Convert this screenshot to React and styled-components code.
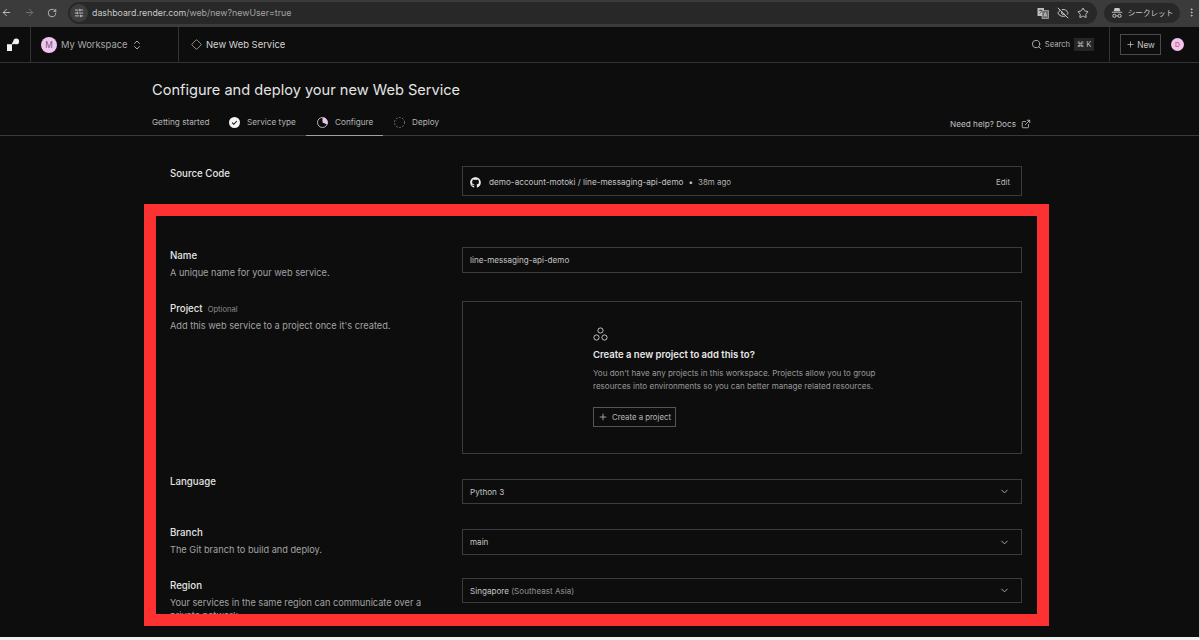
import styled, { createGlobalStyle } from "styled-components";
import { ArrowLeft, ArrowRight, RotateCw, SlidersHorizontal, EyeOff, Star, EllipsisVertical, ChevronsUpDown, Diamond, Search, Plus, ExternalLink, ChevronDown } from "lucide-react";
import { FaGithub } from "react-icons/fa";

const GlobalStyle = createGlobalStyle`
  html, body { margin: 0; padding: 0; background: #0d0d0d; }
  body { font-family: Inter, "Liberation Sans", sans-serif; overflow: hidden; }
`;

const Frame = styled.div`
  position: relative;
  width: 1200px;
  height: 640px;
  box-sizing: border-box;
  overflow: hidden;
  background: #0d0d0d;
  border-right: 1px solid #cfcfcf;
  border-bottom: 3px solid #f0f0f0;
  color: #e8e8e8;
`;

/* browser chrome */
const BrowserBar = styled.div`
  height: 27px;
  display: flex;
  align-items: center;
  background: #3b3b3b;
  box-sizing: border-box;
  padding: 0 0 2px 0;
`;
const NavArrows = styled.div`
  width: 68px;
  display: flex;
  align-items: center;
  justify-content: space-between;
  box-sizing: border-box;
  padding: 0 11px 0 1px;
  color: #c4c4c4;
`;
const Omnibox = styled.div`
  width: 1029px;
  height: 22px;
  display: flex;
  align-items: center;
  border-radius: 11px;
  background: #282828;
`;
const SiteIcon = styled.div`
  width: 18px;
  height: 18px;
  margin-left: 2px;
  border-radius: 50%;
  background: #3d3d3d;
  display: flex;
  align-items: center;
  justify-content: center;
  color: #d4d4d4;
`;
const Url = styled.span`
  margin-left: 4px;
  flex: 1;
  font-size: 8.8px;
  color: #c8c8c8;
  span { color: #a4a4a4; }
`;
const OmniIcons = styled.div`
  display: flex;
  align-items: center;
  gap: 8px;
  padding-right: 8px;
  color: #c4c4c4;
`;
const Incognito = styled.div`
  width: 76px;
  height: 20px;
  margin-left: 7px;
  border-radius: 10px;
  background: #282828;
  display: flex;
  align-items: center;
  justify-content: center;
  gap: 5px;
  font-family: "Noto Sans CJK JP", sans-serif;
  font-size: 7.6px;
  color: #c8c8c8;
`;
const MenuDots = styled.div`
  margin-left: 6px;
  display: flex;
  color: #c4c4c4;
`;

/* top nav */
const Nav = styled.nav`
  height: 36px;
  display: flex;
  align-items: stretch;
  box-sizing: border-box;
  border-bottom: 1px solid #333;
  font-size: 9.5px;
`;
const LogoCell = styled.div`
  width: 31px;
  box-sizing: border-box;
  border-right: 1px solid #333;
  display: flex;
  align-items: center;
  padding-left: 6px;
`;
const WorkspaceCell = styled.div`
  width: 148px;
  box-sizing: border-box;
  border-right: 1px solid #333;
  display: flex;
  align-items: center;
  padding-left: 10px;
  color: #a8a8a8;
`;
const Avatar = styled.div`
  width: ${p => p.$size}px;
  height: ${p => p.$size}px;
  border-radius: 50%;
  background: #f0c4ee;
  color: ${p => p.$ink};
  font-size: ${p => p.$size * 0.52}px;
  display: flex;
  align-items: center;
  justify-content: center;
  flex-shrink: 0;
`;
const WorkspaceName = styled.span`
  margin: 0 4px;
  width: 66px;
  white-space: nowrap;
  font-size: 9.4px;
`;
const Crumb = styled.div`
  flex: 1;
  display: flex;
  align-items: center;
  gap: 4px;
  padding-left: 12px;
  color: #d4d4d4;
  font-size: 9.45px;
`;
const SearchCell = styled.div`
  display: flex;
  align-items: center;
  padding-right: 15px;
  color: #b4b4b4;
  font-size: 7.6px;
  gap: 3px;
`;
const Kbd = styled.span`
  margin-left: 1px;
  width: 20px;
  height: 13px;
  display: flex;
  align-items: center;
  justify-content: center;
  background: #262626;
  font-size: 7.5px;
  gap: 2px;
  color: #c0c0c0;
`;
const NewCell = styled.div`
  width: 90px;
  box-sizing: border-box;
  border-left: 1px solid #333;
  display: flex;
  align-items: center;
  padding-left: 10px;
  gap: 10px;
`;
const NewButton = styled.button`
  width: 41px;
  height: 21px;
  padding: 0;
  background: transparent;
  border: 1px solid #4a4a4a;
  color: #c4c4c4;
  font: inherit;
  font-size: 8.3px;
  display: flex;
  align-items: center;
  justify-content: center;
  gap: 2px;
`;

/* page header */
const Title = styled.h1`
  margin: 0;
  padding: 18px 0 0 152px;
  height: 50px;
  box-sizing: border-box;
  font-size: 14.6px;
  line-height: 18px;
  font-weight: 400;
  color: #e4e4e4;
`;
const TabBar = styled.div`
  height: 22px;
  padding-left: 152px;
  padding-right: 168px;
  display: flex;
  align-items: stretch;
  border-bottom: 1px solid #3a3a3a;
  font-size: 8.2px;
  color: #b4b4b4;
`;
const Tab = styled.div`
  display: flex;
  align-items: center;
  gap: 7px;
  width: ${p => p.$width}px;
  padding-left: ${p => p.$pad}px;
  box-sizing: border-box;
  height: 23px;
  padding-bottom: 4px;
  white-space: nowrap;
  border-bottom: 1px solid ${p => (p.$active ? "#a0a0a0" : "transparent")};
`;
const Help = styled.div`
  margin-left: auto;
  display: flex;
  align-items: center;
  gap: 5px;
  height: 23px;
  padding-bottom: 2px;
  box-sizing: border-box;
  color: #c0c0c0;
  font-size: 8.2px;
`;

/* form */
const Form = styled.div`
  padding: 30px 179px 0 170px;
`;
const Row = styled.div`
  display: grid;
  grid-template-columns: 292px 560px;
  margin-top: ${p => p.$top}px;
`;
const LabelCol = styled.div`
  margin-top: ${p => p.$top}px;
  max-height: ${p => p.$maxHeight}px;
`;
const Label = styled.div`
  height: 12px;
  font-size: 9.7px;
  line-height: 12px;
  font-weight: 500;
  color: #e4e4e4;
  display: flex;
  align-items: baseline;
  gap: 5px;
`;
const Optional = styled.span`
  font-size: 7.6px;
  font-weight: 400;
  color: #8c8c8c;
`;
const Hint = styled.div`
  margin-top: 4px;
  font-size: 9.2px;
  line-height: 13px;
  color: #a2a2a2;
  width: 262px;
`;
const Field = styled.div`
  height: ${p => p.$height}px;
  box-sizing: border-box;
  border: 1px solid #3c3c3c;
  display: flex;
  align-items: center;
  padding: 0 11px 0 7px;
  font-size: 8.1px;
  color: #c4c4c4;
`;
const RepoField = styled(Field)`
  padding-top: 2px;
`;
const RepoLink = styled.span`
  margin-left: 8px;
  flex: 1;
  display: flex;
  align-items: center;
  gap: 5px;
  font-size: 8.2px;
`;
const Ago = styled.span`
  font-size: 7.9px;
  color: #b0b0b0;
`;
const Edit = styled.span`
  font-size: 7.8px;
  color: #b8b8b8;
`;
const SelectValue = styled.span`
  flex: 1;
  small { font-size: inherit; color: #909090; }
`;
const ProjectBox = styled.div`
  height: 153px;
  box-sizing: border-box;
  border: 1px solid #3c3c3c;
  padding: 25px 0 0 130px;
`;
const ProjectTitle = styled.div`
  margin-top: 6px;
  font-size: 9.5px;
  line-height: 14px;
  font-weight: 600;
  color: #e8e8e8;
`;
const ProjectText = styled.p`
  margin: 5px 0 0;
  font-size: 8.05px;
  line-height: 13px;
  color: #999;
  white-space: nowrap;
`;
const CreateButton = styled.button`
  margin-top: 14px;
  width: 83px;
  height: 20px;
  padding: 0;
  background: transparent;
  border: 1px solid #555;
  color: #b8b8b8;
  font: inherit;
  font-size: 7.8px;
  display: flex;
  align-items: center;
  justify-content: center;
  gap: 4px;
`;

/* annotation drawn over the screenshot */
const Highlight = styled.div`
  position: absolute;
  left: 144px;
  top: 204px;
  width: 905px;
  height: 422px;
  box-sizing: border-box;
  border: 12px solid #fc3232;
  pointer-events: none;
`;

const RenderLogo = () => (
  <svg width="14" height="14" viewBox="0 0 14 14" fill="#f2f2f2">
    <path d="M1 6.2h5v6.8H1z" />
    <path d="M6 6.2c0-1.4.6-2.4 2-2.9v2.9z" />
    <circle cx="10.2" cy="3.4" r="2.9" />
  </svg>
);

const TranslateIcon = () => (
  <svg width="12" height="12" viewBox="0 0 12 12">
    <path d="M.5 1h6.5v8H.5z" fill="#bdbdbd" />
    <path d="M5 3.5h6.5v8H5z" fill="#6c6c6c" stroke="#c8c8c8" strokeWidth=".6" />
    <path d="M2 3.5h3.4M3.7 2.5v1M2.6 6.5c1.4-.7 2.1-1.8 2.3-3" stroke="#333" strokeWidth=".7" fill="none" />
    <path d="M7 9.5l1.3-4 1.3 4M7.5 8.2h1.7" stroke="#e4e4e4" strokeWidth=".6" fill="none" />
  </svg>
);

const IncognitoIcon = () => (
  <svg width="12" height="12" viewBox="0 0 12 12" fill="#c8c8c8">
    <path d="M3.6 1h4.8l.9 3.2H2.7z" />
    <path d="M.8 4.8h10.4v.9H.8z" />
    <circle cx="3.4" cy="8.8" r="1.6" fill="none" stroke="#c8c8c8" strokeWidth="1" />
    <circle cx="8.6" cy="8.8" r="1.6" fill="none" stroke="#c8c8c8" strokeWidth="1" />
    <path d="M5 8.4h2v.8H5z" />
  </svg>
);

const CheckStep = () => (
  <svg width="11" height="11" viewBox="0 0 11 11">
    <circle cx="5.5" cy="5.5" r="5.5" fill="#f4f4f4" />
    <path d="M3.1 5.6l1.7 1.7 3-3.3" fill="none" stroke="#111" strokeWidth="1.1" />
  </svg>
);

const HalfStep = () => (
  <svg width="11" height="11" viewBox="0 0 11 11">
    <circle cx="5.5" cy="5.5" r="5" fill="none" stroke="#c8c8c8" strokeWidth=".9" />
    <path d="M5.5 .5a5 5 0 0 1 4.6 7L5.5 5.5z" fill="#eec4ec" />
  </svg>
);

const DashedStep = () => (
  <svg width="11" height="11" viewBox="0 0 11 11">
    <circle cx="5.5" cy="5.5" r="5" fill="none" stroke="#a0a0a0" strokeWidth=".8" strokeDasharray="1.6 1.6" />
  </svg>
);

const ProjectsIcon = () => (
  <svg width="15" height="15" viewBox="0 0 15 15" fill="none" stroke="#d4d4d4" strokeWidth=".9" style={{ display: "block" }}>
    <circle cx="7.5" cy="3.5" r="2.6" />
    <circle cx="3.5" cy="10.5" r="2.6" />
    <circle cx="11.5" cy="10.5" r="2.6" />
  </svg>
);

const Select = ({ height, children }) => (
  <Field $height={height}>
    <SelectValue>{children}</SelectValue>
    <ChevronDown size={11} color="#b4b4b4" />
  </Field>
);

export default function App() {
  return (
    <Frame>
      <GlobalStyle />
      <BrowserBar>
        <NavArrows>
          <ArrowLeft size={11} />
          <ArrowRight size={11} color="#777" />
          <RotateCw size={10} />
        </NavArrows>
        <Omnibox>
          <SiteIcon><SlidersHorizontal size={10} /></SiteIcon>
          <Url>dashboard.render.com<span>/web/new?newUser=true</span></Url>
          <OmniIcons>
            <TranslateIcon />
            <EyeOff size={12} />
            <Star size={12} />
          </OmniIcons>
        </Omnibox>
        <Incognito><IncognitoIcon />シークレット</Incognito>
        <MenuDots><EllipsisVertical size={11} /></MenuDots>
      </BrowserBar>

      <Nav>
        <LogoCell><RenderLogo /></LogoCell>
        <WorkspaceCell>
          <Avatar $size={16} $ink="#6e5a6e">M</Avatar>
          <WorkspaceName>My Workspace</WorkspaceName>
          <ChevronsUpDown size={12} />
        </WorkspaceCell>
        <Crumb><Diamond size={11} strokeWidth={1.4} />New Web Service</Crumb>
        <SearchCell>
          <Search size={11} />
          Search
          <Kbd>⌘ K</Kbd>
        </SearchCell>
        <NewCell>
          <NewButton><Plus size={9} />New</NewButton>
          <Avatar $size={13} $ink="#b8405a">D</Avatar>
        </NewCell>
      </Nav>

      <Title>Configure and deploy your new Web Service</Title>
      <TabBar>
        <Tab $width={77} $pad={0}>Getting started</Tab>
        <Tab $width={77} $pad={0}><CheckStep />Service type</Tab>
        <Tab $width={77} $pad={11} $active><HalfStep />Configure</Tab>
        <Tab $width={77} $pad={11}><DashedStep />Deploy</Tab>
        <Help>Need help? Docs <ExternalLink size={10} /></Help>
      </TabBar>

      <Form>
        <Row $top={0}>
          <LabelCol $top={2}><Label>Source Code</Label></LabelCol>
          <RepoField $height={30}>
            <FaGithub size={11} color="#eee" />
            <RepoLink>
              demo-account-motoki / line-messaging-api-demo
              <span>•</span>
              <Ago>38m ago</Ago>
            </RepoLink>
            <Edit>Edit</Edit>
          </RepoField>
        </Row>

        <Row $top={51}>
          <LabelCol $top={3} $maxHeight={23}>
            <Label>Name</Label>
            <Hint>A unique name for your web service.</Hint>
          </LabelCol>
          <Field $height={26}>line-messaging-api-demo</Field>
        </Row>

        <Row $top={28}>
          <LabelCol $top={2}>
            <Label>Project <Optional>Optional</Optional></Label>
            <Hint>Add this web service to a project once it's created.</Hint>
          </LabelCol>
          <ProjectBox>
            <ProjectsIcon />
            <ProjectTitle>Create a new project to add this to?</ProjectTitle>
            <ProjectText>
              You don't have any projects in this workspace. Projects allow you to group<br />
              resources into environments so you can better manage related resources.
            </ProjectText>
            <CreateButton><Plus size={10} />Create a project</CreateButton>
          </ProjectBox>
        </Row>

        <Row $top={25}>
          <LabelCol $top={-3} $maxHeight={25}><Label>Language</Label></LabelCol>
          <Select height={25}>Python 3</Select>
        </Row>

        <Row $top={25}>
          <LabelCol $top={-2} $maxHeight={24}>
            <Label>Branch</Label>
            <Hint>The Git branch to build and deploy.</Hint>
          </LabelCol>
          <Select height={26}>main</Select>
        </Row>

        <Row $top={23}>
          <LabelCol $top={2}>
            <Label>Region</Label>
            <Hint>Your services in the same region can communicate over a private network.</Hint>
          </LabelCol>
          <Select height={25}>Singapore <small>(Southeast Asia)</small></Select>
        </Row>
      </Form>

      <Highlight />
    </Frame>
  );
}
